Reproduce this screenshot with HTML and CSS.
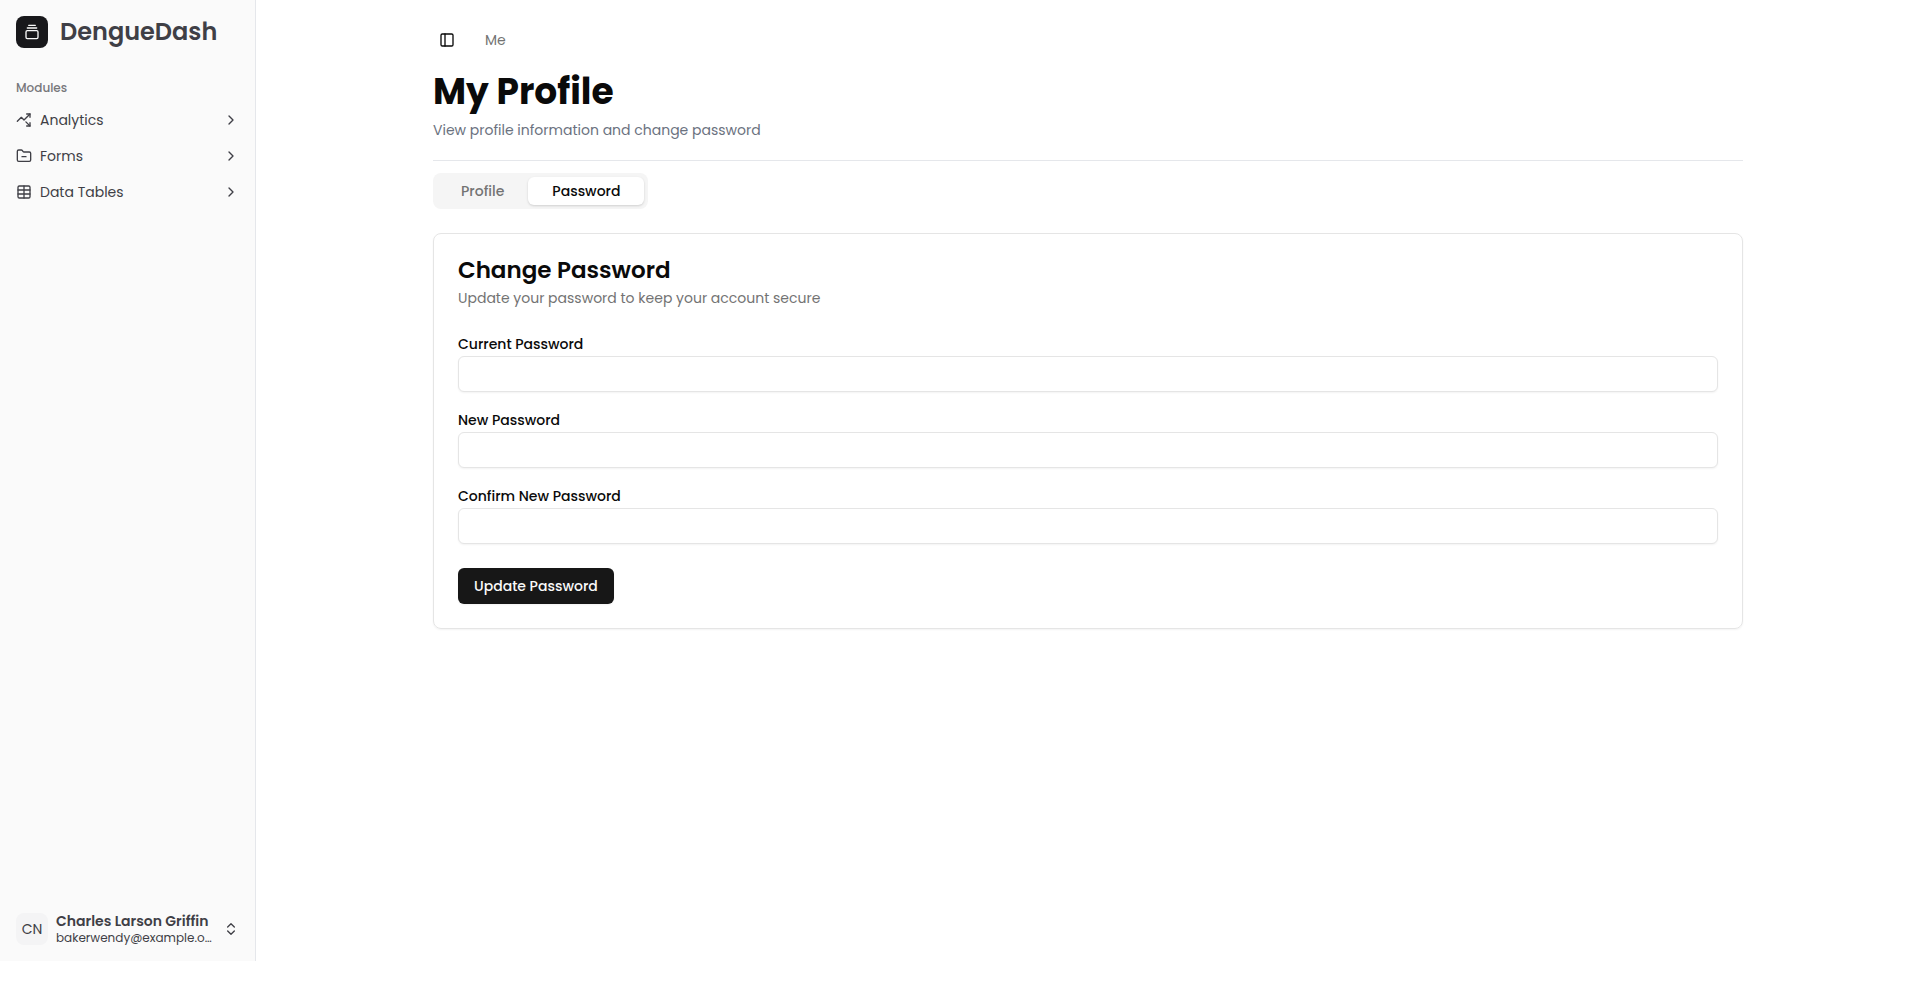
FILE: index.html
```html
<!DOCTYPE html>
<html lang="en">
<head>
  <meta charset="utf-8">
  <meta name="viewport" content="width=device-width, initial-scale=1">
  <title>DengueDash - My Profile</title>
  <link rel="stylesheet" href="styles.css">
</head>
<body>
  <div class="app">
    <aside class="sidebar">
      <a class="brand" href="#">
        <span class="brand-mark">
          <svg class="icon" viewBox="0 0 24 24" aria-hidden="true"><path d="M7 2h10"/><path d="M5 6h14"/><rect width="18" height="12" x="3" y="10" rx="2"/></svg>
        </span>
        <span class="brand-name">DengueDash</span>
      </a>

      <nav class="nav" aria-labelledby="nav-title">
        <h2 class="nav-title" id="nav-title">Modules</h2>
        <button class="nav-item" type="button">
          <svg class="icon" viewBox="0 0 24 24" aria-hidden="true"><path d="M14.828 14.828 21 21"/><path d="M21 16v5h-5"/><path d="m21 3-9 9-4-4-6 6"/><path d="M21 8V3h-5"/></svg>
          <span class="nav-label">Analytics</span>
          <svg class="icon" viewBox="0 0 24 24" aria-hidden="true"><path d="m9 18 6-6-6-6"/></svg>
        </button>
        <button class="nav-item" type="button">
          <svg class="icon" viewBox="0 0 24 24" aria-hidden="true"><path d="M9 13h6"/><path d="M20 20a2 2 0 0 0 2-2V8a2 2 0 0 0-2-2h-7.9a2 2 0 0 1-1.69-.9L9.6 3.9A2 2 0 0 0 7.93 3H4a2 2 0 0 0-2 2v13a2 2 0 0 0 2 2Z"/></svg>
          <span class="nav-label">Forms</span>
          <svg class="icon" viewBox="0 0 24 24" aria-hidden="true"><path d="m9 18 6-6-6-6"/></svg>
        </button>
        <button class="nav-item" type="button">
          <svg class="icon" viewBox="0 0 24 24" aria-hidden="true"><path d="M12 3v18"/><rect width="18" height="18" x="3" y="3" rx="2"/><path d="M3 9h18"/><path d="M3 15h18"/></svg>
          <span class="nav-label">Data Tables</span>
          <svg class="icon" viewBox="0 0 24 24" aria-hidden="true"><path d="m9 18 6-6-6-6"/></svg>
        </button>
      </nav>

      <button class="user" type="button">
        <span class="avatar">CN</span>
        <span class="user-text">
          <span class="user-name">Charles Larson Griffin</span>
          <span class="user-email">bakerwendy@example.org</span>
        </span>
        <svg class="icon" viewBox="0 0 24 24" aria-hidden="true"><path d="m7 15 5 5 5-5"/><path d="m7 9 5-5 5 5"/></svg>
      </button>
    </aside>

    <main class="main">
      <div class="content">
        <header class="topbar">
          <button class="toggle" type="button" aria-label="Toggle sidebar">
            <svg class="icon" viewBox="0 0 24 24" aria-hidden="true"><rect width="18" height="18" x="3" y="3" rx="2"/><path d="M9 3v18"/></svg>
          </button>
          <nav aria-label="Breadcrumb"><a class="crumb" href="#">Me</a></nav>
        </header>

        <div class="page-head">
          <h1 class="page-title">My Profile</h1>
          <p class="page-subtitle">View profile information and change password</p>
        </div>

        <div class="tabs" role="tablist">
          <button class="tab" type="button" role="tab" aria-selected="false">Profile</button>
          <button class="tab tab-active" type="button" role="tab" aria-selected="true">Password</button>
        </div>

        <section class="card">
          <h2 class="card-title">Change Password</h2>
          <p class="card-subtitle">Update your password to keep your account secure</p>
          <form class="form">
            <div class="field">
              <label class="field-label" for="current">Current Password</label>
              <input class="input" id="current" type="password">
            </div>
            <div class="field">
              <label class="field-label" for="new">New Password</label>
              <input class="input" id="new" type="password">
            </div>
            <div class="field">
              <label class="field-label" for="confirm">Confirm New Password</label>
              <input class="input" id="confirm" type="password">
            </div>
            <button class="submit" type="submit">Update Password</button>
          </form>
        </section>
      </div>
    </main>
  </div>
</body>
</html>
```
FILE: styles.css
```css
*,
*::before,
*::after {
  box-sizing: border-box;
}

body {
  margin: 0;
  background: #fff;
  color: #0a0a0a;
  font-family: Poppins, Inter, "Liberation Sans", sans-serif;
  font-size: 14px;
  line-height: 20px;
}

h1,
h2,
p {
  margin: 0;
}

a {
  color: inherit;
  text-decoration: none;
}

button {
  padding: 0;
  border: 0;
  background: none;
  color: inherit;
  font: inherit;
  cursor: pointer;
}

.icon {
  flex: none;
  width: 16px;
  height: 16px;
  fill: none;
  stroke: currentColor;
  stroke-width: 2;
  stroke-linecap: round;
  stroke-linejoin: round;
}

.app {
  display: flex;
  min-height: calc(100vh - 28px);
}

/* Sidebar */
.sidebar {
  display: flex;
  flex: none;
  flex-direction: column;
  width: 256px;
  padding: 8px;
  border-right: 1px solid #e5e7eb;
  background: #fafafa;
  color: #3f3f46;
}

.brand {
  display: flex;
  align-items: center;
  gap: 12px;
  padding: 8px;
}

.brand-mark {
  display: grid;
  place-items: center;
  width: 32px;
  height: 32px;
  border-radius: 8px;
  background: #18181b;
  color: #fafafa;
}

.brand-name {
  font-size: 24px;
  font-weight: 600;
  line-height: 32px;
}

.nav {
  display: flex;
  flex: 1;
  flex-direction: column;
  gap: 4px;
  padding-top: 16px;
}

.nav-title {
  padding: 6px 8px;
  margin-bottom: -4px;
  color: #77777b;
  font-size: 12px;
  font-weight: 500;
}

.nav-item {
  display: flex;
  align-items: center;
  gap: 8px;
  height: 32px;
  padding: 0 8px;
  text-align: left;
}

.nav-label {
  flex: 1;
}

.user {
  display: flex;
  align-items: center;
  gap: 8px;
  height: 48px;
  padding: 0 8px;
  text-align: left;
}

.avatar {
  display: grid;
  flex: none;
  place-items: center;
  width: 32px;
  height: 32px;
  border-radius: 8px;
  background: #f4f4f5;
}

.user-text {
  display: grid;
  flex: 1;
  min-width: 0;
}

.user-name,
.user-email {
  overflow: hidden;
  text-overflow: ellipsis;
  white-space: nowrap;
}

.user-name {
  font-weight: 600;
  line-height: 18px;
}

.user-email {
  font-size: 12px;
  line-height: 16px;
}

/* Main column */
.main {
  flex: 1;
  min-width: 0;
  padding: 24px;
}

.content {
  max-width: 1310px;
  margin: 0 auto;
}

.topbar {
  display: flex;
  align-items: center;
  gap: 24px;
  height: 32px;
}

.toggle {
  display: grid;
  place-items: center;
  width: 28px;
  height: 28px;
}

.crumb {
  color: #737373;
}

.page-head {
  padding: 16px 0 20px;
  border-bottom: 1px solid #e5e7eb;
}

.page-title {
  font-size: 36px;
  font-weight: 700;
  line-height: 40px;
}

.page-subtitle {
  margin-top: 8px;
  color: #6b7280;
}

.tabs {
  display: inline-flex;
  margin-top: 12px;
  padding: 4px;
  border-radius: 8px;
  background: #f5f5f5;
}

.tab {
  height: 28px;
  padding: 0 24px;
  border-radius: 6px;
  color: #737373;
  font-weight: 500;
}

.tab-active {
  background: #fff;
  color: #0a0a0a;
  box-shadow: 0 1px 3px rgba(0, 0, 0, 0.1), 0 1px 2px rgba(0, 0, 0, 0.06);
}

.card {
  margin-top: 24px;
  padding: 24px;
  border: 1px solid #e5e5e5;
  border-radius: 8px;
  box-shadow: 0 1px 2px rgba(0, 0, 0, 0.05);
}

.card-title {
  font-size: 23px;
  font-weight: 600;
  line-height: 24px;
}

.card-subtitle {
  margin-top: 6px;
  color: #737373;
}

.form {
  display: flex;
  flex-direction: column;
  gap: 16px;
  margin-top: 24px;
}

.field {
  display: flex;
  flex-direction: column;
}

.field-label {
  font-weight: 500;
  line-height: 24px;
}

.input {
  width: 100%;
  height: 36px;
  padding: 4px 12px;
  border: 1px solid #e5e5e5;
  border-radius: 6px;
  background: #fff;
  font: inherit;
  box-shadow: 0 1px 2px rgba(0, 0, 0, 0.05);
}

.submit {
  align-self: flex-start;
  height: 36px;
  margin-top: 8px;
  padding: 0 16px;
  border-radius: 6px;
  background: #171717;
  color: #fafafa;
  font-weight: 500;
  box-shadow: 0 1px 2px rgba(0, 0, 0, 0.05);
}
```
